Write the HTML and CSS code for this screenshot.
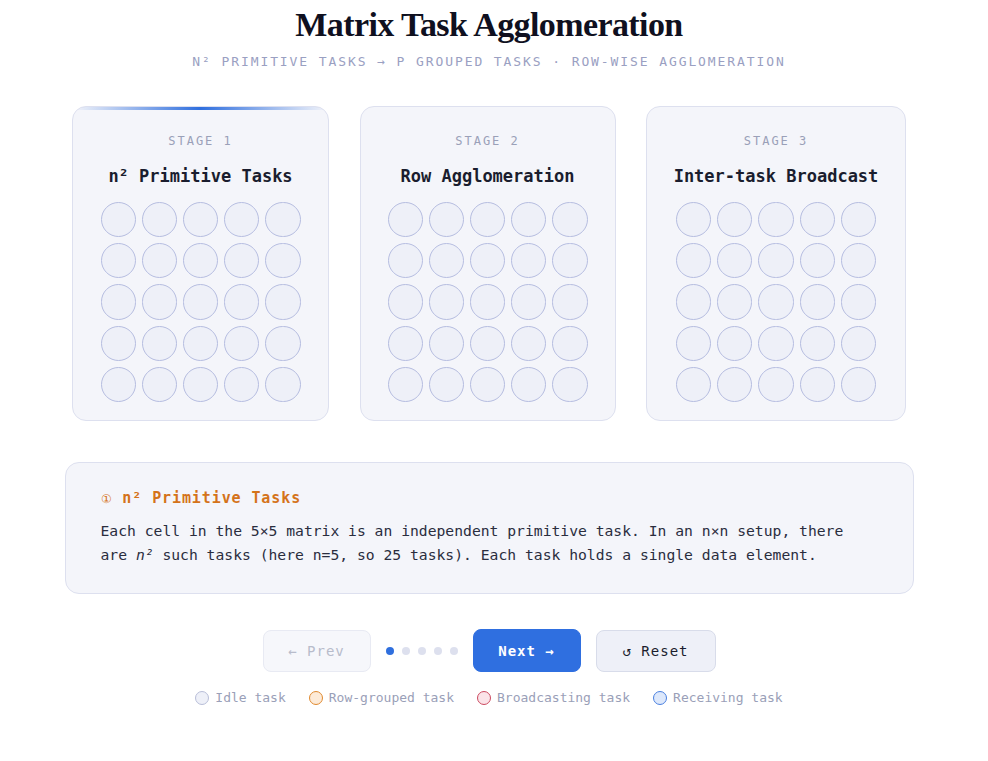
FILE: index.html
```html
<!DOCTYPE html>
<html lang="en">
<head>
<meta charset="utf-8">
<title>Matrix Task Agglomeration</title>
<link rel="stylesheet" href="styles.css">
</head>
<body>
<div class="page">
  <header class="header">
    <h1 class="title">Matrix Task Agglomeration</h1>
    <p class="subtitle">N² primitive tasks → P grouped tasks · row-wise agglomeration</p>
  </header>

  <section class="stages">
    <div class="card card-active">
      <div class="stage-label">STAGE 1</div>
      <div class="stage-title">n² Primitive Tasks</div>
      <div class="matrix">
        <span class="cell"></span><span class="cell"></span><span class="cell"></span><span class="cell"></span><span class="cell"></span>
        <span class="cell"></span><span class="cell"></span><span class="cell"></span><span class="cell"></span><span class="cell"></span>
        <span class="cell"></span><span class="cell"></span><span class="cell"></span><span class="cell"></span><span class="cell"></span>
        <span class="cell"></span><span class="cell"></span><span class="cell"></span><span class="cell"></span><span class="cell"></span>
        <span class="cell"></span><span class="cell"></span><span class="cell"></span><span class="cell"></span><span class="cell"></span>
      </div>
    </div>
    <div class="card">
      <div class="stage-label">STAGE 2</div>
      <div class="stage-title">Row Agglomeration</div>
      <div class="matrix">
        <span class="cell"></span><span class="cell"></span><span class="cell"></span><span class="cell"></span><span class="cell"></span>
        <span class="cell"></span><span class="cell"></span><span class="cell"></span><span class="cell"></span><span class="cell"></span>
        <span class="cell"></span><span class="cell"></span><span class="cell"></span><span class="cell"></span><span class="cell"></span>
        <span class="cell"></span><span class="cell"></span><span class="cell"></span><span class="cell"></span><span class="cell"></span>
        <span class="cell"></span><span class="cell"></span><span class="cell"></span><span class="cell"></span><span class="cell"></span>
      </div>
    </div>
    <div class="card">
      <div class="stage-label">STAGE 3</div>
      <div class="stage-title">Inter-task Broadcast</div>
      <div class="matrix">
        <span class="cell"></span><span class="cell"></span><span class="cell"></span><span class="cell"></span><span class="cell"></span>
        <span class="cell"></span><span class="cell"></span><span class="cell"></span><span class="cell"></span><span class="cell"></span>
        <span class="cell"></span><span class="cell"></span><span class="cell"></span><span class="cell"></span><span class="cell"></span>
        <span class="cell"></span><span class="cell"></span><span class="cell"></span><span class="cell"></span><span class="cell"></span>
        <span class="cell"></span><span class="cell"></span><span class="cell"></span><span class="cell"></span><span class="cell"></span>
      </div>
    </div>
  </section>

  <section class="info">
    <h2 class="info-title"><span class="info-num">①</span> n² Primitive Tasks</h2>
    <p class="info-text"><span class="line">Each cell in the 5×5 matrix is an independent primitive task. In an n×n setup, there</span><span class="line">are <i>n²</i> such tasks (here n=5, so 25 tasks). Each task holds a single data element.</span></p>
  </section>

  <div class="controls">
    <button class="btn btn-prev" disabled>← Prev</button>
    <div class="dots">
      <span class="dot dot-on"></span><span class="dot"></span><span class="dot"></span><span class="dot"></span><span class="dot"></span>
    </div>
    <button class="btn btn-next">Next →</button>
    <button class="btn btn-reset">↺ Reset</button>
  </div>

  <div class="legend">
    <span class="legend-item"><span class="swatch sw-idle"></span>Idle task</span>
    <span class="legend-item"><span class="swatch sw-row"></span>Row-grouped task</span>
    <span class="legend-item"><span class="swatch sw-bcast"></span>Broadcasting task</span>
    <span class="legend-item"><span class="swatch sw-recv"></span>Receiving task</span>
  </div>
</div>
</body>
</html>
```

FILE: styles.css
```css
* { box-sizing: border-box; }

html, body {
  margin: 0;
  padding: 0;
  background: #ffffff;
}

body {
  font-family: "DejaVu Sans Mono", "Liberation Mono", monospace;
  color: #1a1d2e;
}

.page {
  width: 978px;
  display: flex;
  flex-direction: column;
  align-items: center;
}

.header {
  display: flex;
  flex-direction: column;
  align-items: center;
  padding-top: 3px;
}

.title {
  margin: 0;
  font-family: "Liberation Serif", "DejaVu Serif", serif;
  font-weight: 700;
  font-size: 34px;
  line-height: 44px;
  letter-spacing: -0.6px;
  color: #0f1020;
}

.subtitle {
  margin: 6px 0 0;
  font-size: 13px;
  line-height: 18px;
  letter-spacing: 1.9px;
  text-transform: uppercase;
  color: #9aa0c2;
}

.stages {
  margin-top: 35px;
  display: grid;
  grid-template-columns: 257px 256px 260px;
  column-gap: 30.5px;
}

.card {
  position: relative;
  overflow: hidden;
  background: #f4f5fa;
  border: 1px solid #dde0ef;
  border-radius: 14px;
  padding: 26px 0 20px;
  display: flex;
  flex-direction: column;
  align-items: center;
  height: 315px;
}

.card-active::before {
  content: "";
  position: absolute;
  left: 0;
  right: 0;
  top: 0;
  height: 3px;
  background: linear-gradient(90deg, rgba(47,111,222,0) 0%, #2f6fde 50%, rgba(47,111,222,0) 100%);
}

.stage-label {
  font-size: 12px;
  line-height: 16px;
  letter-spacing: 2px;
  color: #9aa0b8;
}

.stage-title {
  margin-top: 16px;
  font-size: 17px;
  line-height: 22px;
  font-weight: 700;
  color: #1a1d2e;
}

.matrix {
  margin-top: 15px;
  width: 200px;
  display: grid;
  grid-template-columns: repeat(5, 1fr);
  gap: 6px;
}

.cell {
  display: block;
  aspect-ratio: 1;
  border-radius: 50%;
  background: #eef0f8;
  border: 1.5px solid #b6bde0;
}

.info {
  margin-top: 41px;
  width: 849px;
  background: #f4f5fa;
  border: 1px solid #dde0ef;
  border-radius: 14px;
  padding: 25px 35px 26px;
}

.info-title {
  margin: 0;
  font-size: 15px;
  line-height: 20px;
  font-weight: 700;
  letter-spacing: 0.9px;
  color: #d4731a;
}

.info-num {
  font-size: 12px;
  font-weight: 400;
}

.info-text {
  margin: 10px 0 0;
  font-size: 14.7px;
  line-height: 24px;
  color: #2a2d3e;
}

.info-text .line {
  display: block;
  white-space: nowrap;
}

.controls {
  margin-top: 35px;
  display: flex;
  align-items: center;
  gap: 15px;
}

.btn {
  font-family: "DejaVu Sans Mono", "Liberation Mono", monospace;
  font-size: 14px;
  letter-spacing: 1px;
  height: 42px;
  border-radius: 8px;
  border: 1px solid #dde0ef;
  padding: 0;
}

.btn-prev {
  width: 108px;
  background: #f6f7fb;
  border-color: #e8eaf3;
  color: #b8bccb;
}

.btn-next {
  width: 108px;
  height: 43px;
  background: #2f6fe0;
  border-color: #2f6fe0;
  color: #ffffff;
  font-weight: 700;
}

.btn-reset {
  width: 120px;
  background: #eef0f8;
  border-color: #d8dcea;
  color: #1a1d2e;
}

.dots {
  display: flex;
  gap: 8px;
}

.dot {
  width: 8px;
  height: 8px;
  border-radius: 50%;
  background: #dde0ee;
}

.dot-on {
  background: #2f6fde;
}

.legend {
  margin-top: 17px;
  display: flex;
  gap: 23px;
  font-size: 13px;
  line-height: 18px;
  color: #9aa0b8;
}

.legend-item {
  display: flex;
  align-items: center;
  gap: 6px;
}

.swatch {
  width: 14px;
  height: 14px;
  border-radius: 50%;
  border: 1.5px solid;
}

.sw-idle { background: #eef0f8; border-color: #b8bed8; }
.sw-row { background: #fdebd8; border-color: #e08a30; }
.sw-bcast { background: #fbe3e8; border-color: #cc4a60; }
.sw-recv { background: #dde8fb; border-color: #4a80e0; }
```
